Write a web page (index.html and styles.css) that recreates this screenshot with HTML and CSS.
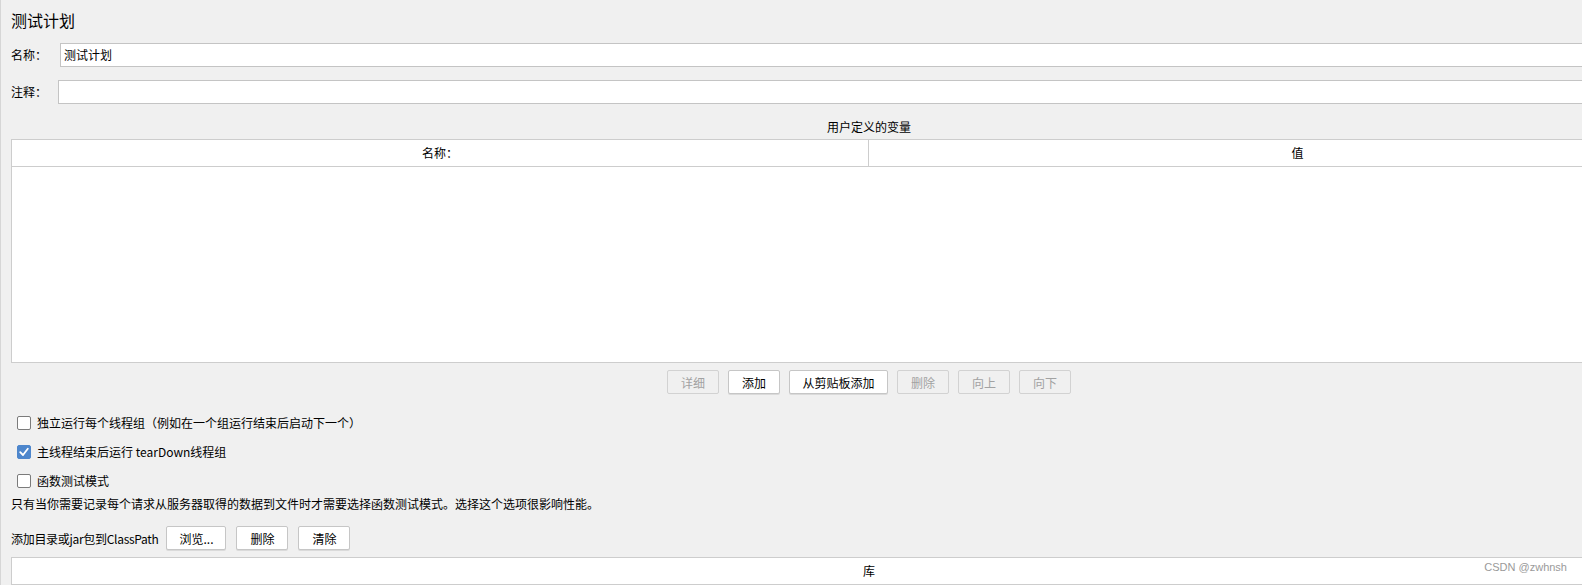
FILE: index.html
```html
<!DOCTYPE html>
<html lang="zh">
<head>
<meta charset="utf-8">
<title>测试计划</title>
<link rel="stylesheet" href="styles.css">
</head>
<body>
<div class="panel">
  <div class="title">测试计划</div>
  <div class="field-row name-row">
    <label class="field-label name-label">名称：</label>
    <div class="text-input">测试计划</div>
  </div>
  <div class="field-row comment-row">
    <label class="field-label comment-label">注释：</label>
    <div class="text-input"></div>
  </div>
  <div class="caption">用户定义的变量</div>
  <div class="table vars">
    <div class="thead">
      <div class="th col-name">名称：</div>
      <div class="th col-value">值</div>
    </div>
    <div class="tbody"></div>
  </div>
  <div class="btn-row">
    <button class="btn disabled">详细</button>
    <button class="btn">添加</button>
    <button class="btn wide">从剪贴板添加</button>
    <button class="btn disabled">删除</button>
    <button class="btn disabled">向上</button>
    <button class="btn disabled">向下</button>
  </div>
  <div class="checks">
    <div class="check-row"><span class="box"></span><span>独立运行每个线程组（例如在一个组运行结束后启动下一个）</span></div>
    <div class="check-row"><span class="box checked"><svg viewBox="0 0 14 14" width="14" height="14"><path d="M3.2 7.2 L6 10 L10.8 3.8" fill="none" stroke="#fff" stroke-width="1.8" stroke-linecap="round" stroke-linejoin="round"/></svg></span><span>主线程结束后运行 tearDown线程组</span></div>
    <div class="check-row"><span class="box"></span><span>函数测试模式</span></div>
  </div>
  <div class="note">只有当你需要记录每个请求从服务器取得的数据到文件时才需要选择函数测试模式。选择这个选项很影响性能。</div>
  <div class="cp-row">
    <span class="cp-label">添加目录或jar包到ClassPath</span>
    <button class="btn browse">浏览...</button>
    <button class="btn">删除</button>
    <button class="btn">清除</button>
  </div>
  <div class="table lib">
    <div class="thead">
      <div class="th col-full">库</div>
    </div>
  </div>
</div>
<div class="watermark">CSDN @zwhnsh</div>
</body>
</html>
```
FILE: styles.css
```css
html, body {
  margin: 0;
  padding: 0;
}
body {
  background: #f0f0f0;
  overflow: hidden;
  width: 1582px;
  height: 585px;
  position: relative;
  font-family: "Noto Sans CJK SC", "Microsoft YaHei", sans-serif;
  font-size: 12px;
  color: #000;
}
.panel {
  border-left: 1px solid #d6d6d6;
  padding: 0 10px 0 10px;
  box-sizing: border-box;
  width: 1737px;
}
.title {
  padding-top: 10px;
  height: 20px;
  line-height: 20px;
  font-size: 16px;
}
.field-row {
  display: flex;
  align-items: center;
  height: 24px;
}
.name-row { margin-top: 13px; }
.comment-row { margin-top: 13px; }
.field-label {
  line-height: 24px;
}
.name-label { width: 49px; }
.comment-label { width: 47px; }
.text-input {
  flex: 1;
  height: 24px;
  box-sizing: border-box;
  background: #fff;
  border: 1px solid #c4c4c4;
  padding-left: 3px;
  line-height: 22px;
}
.caption {
  margin-top: 14px;
  height: 18px;
  line-height: 18px;
  text-align: center;
}
.table {
  background: #fff;
  border: 1px solid #cdcdcd;
}
.vars { margin-top: 3px; }
.thead {
  display: flex;
  height: 26px;
  border-bottom: 1px solid #cdcdcd;
}
.th {
  line-height: 26px;
  text-align: center;
}
.col-name {
  width: 856px;
  border-right: 1px solid #cdcdcd;
}
.col-value { flex: 1; }
.col-full { flex: 1; }
.tbody { height: 195px; }
.btn-row {
  display: flex;
  justify-content: center;
  gap: 9px;
  margin-top: 7px;
  height: 24px;
}
.btn {
  font-family: inherit;
  font-size: 12px;
  height: 24px;
  width: 52px;
  padding: 0;
  box-sizing: border-box;
  background: #fff;
  color: #000;
  border: 1px solid #c6c6c6;
  border-radius: 2px;
  box-shadow: 0 1px 0 #dadada;
}
.btn.wide { width: 99px; }
.btn.disabled {
  background: #f0f0f0;
  color: #a2a2a2;
  border-color: #d2d2d2;
  box-shadow: none;
}
.checks {
  margin-top: 14px;
}
.check-row {
  display: flex;
  align-items: center;
  height: 29px;
}
.box {
  width: 14px;
  height: 14px;
  box-sizing: border-box;
  margin-left: 6px;
  margin-right: 6px;
  border: 1px solid #7b7b7b;
  border-radius: 2px;
  background: #fff;
  display: flex;
}
.box.checked {
  background: #4d86cc;
  border-color: #4d86cc;
}
.box.checked svg { margin: -1px; }
.note {
  height: 18px;
  line-height: 18px;
}
.cp-row {
  display: flex;
  align-items: center;
  margin-top: 13px;
  height: 24px;
  gap: 10px;
}
.cp-label {
  white-space: nowrap;
  letter-spacing: -0.3px;
  margin-right: -2px;
}
.btn.browse { width: 60px; }
.lib {
  margin-top: 7px;
  height: 60px;
}
.watermark {
  position: absolute;
  right: 15px;
  top: 561px;
  font-family: "Liberation Sans", Arial, sans-serif;
  font-size: 11px;
  color: #9a9a9a;
}
```
